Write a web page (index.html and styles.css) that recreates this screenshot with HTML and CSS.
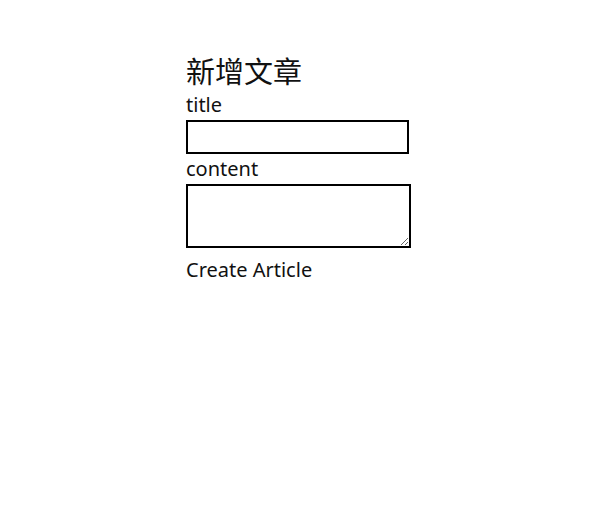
FILE: index.html
```html
<!DOCTYPE html>
<html lang="zh-Hant">
<head>
<meta charset="utf-8">
<title>新增文章</title>
<link rel="stylesheet" href="styles.css">
</head>
<body>
<form class="article-form">
  <h1 class="form-title">新增文章</h1>
  <label class="field-label" for="title">title</label>
  <input class="text-input" id="title" type="text">
  <label class="field-label" for="content">content</label>
  <textarea class="text-area" id="content"></textarea>
  <button class="submit-btn" type="submit">Create Article</button>
</form>
</body>
</html>
```

FILE: styles.css
```css
html, body {
  margin: 0;
  padding: 0;
  background: #fff;
}
body {
  font-family: "Noto Sans", "Noto Sans CJK TC", sans-serif;
  color: #111;
}
.article-form {
  display: flex;
  flex-direction: column;
  align-items: flex-start;
  padding: 52px 0 0 186px;
}
.form-title {
  margin: 0 0 2px;
  font-size: 29px;
  font-weight: 400;
  line-height: 36px;
  font-family: "Noto Sans CJK TC", sans-serif;
}
.field-label {
  font-size: 20px;
  line-height: 30px;
}
.text-input {
  box-sizing: border-box;
  width: 223px;
  height: 34px;
  border: 2px solid #000;
  margin: 0;
  padding: 2px 4px;
  font-size: 16px;
}
.text-area {
  box-sizing: border-box;
  width: 225px;
  height: 64px;
  border: 2px solid #000;
  margin: 0;
  padding: 2px 4px;
  font-size: 16px;
}
.submit-btn {
  margin-top: 8px;
  padding: 0;
  border: none;
  background: none;
  font-family: inherit;
  font-size: 20px;
  line-height: 28px;
  color: #111;
}
```
